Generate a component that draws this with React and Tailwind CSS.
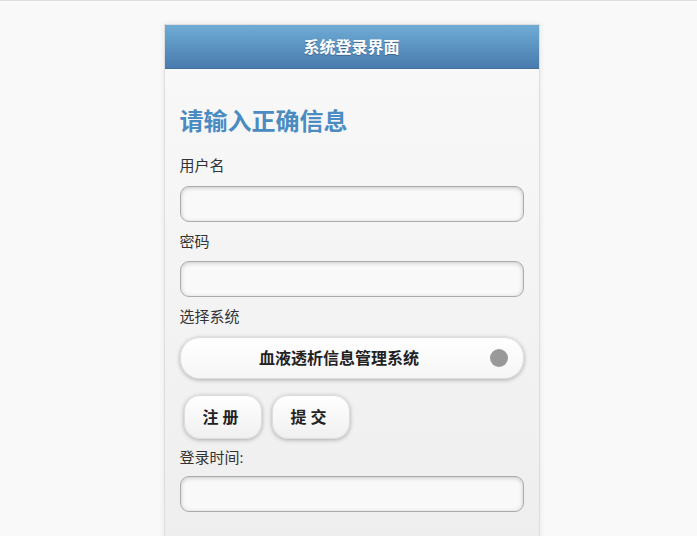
import React from 'react';

const font = { fontFamily: '"Open Sans", "Noto Sans CJK SC", sans-serif' };

const Field = () => (
  <input
    type="text"
    className="block h-[36px] w-full rounded-[9px] border border-[#aaa] bg-[#f9f9f9] px-3 shadow-[inset_0_1px_4px_rgba(0,0,0,0.2)] outline-none"
  />
);

const Label = ({ children, className = 'mb-[10px] mt-[9px]' }) => (
  <div className={`${className} text-[15px] leading-[20px] text-[#333]`}>{children}</div>
);

const App = () => {
  return (
    <div className="flex min-h-[536px] justify-center overflow-hidden border-t border-[#ddd] bg-[#f9f9f9] pl-[6px]" style={font}>
      <div className="mt-[23px] w-[376px] self-start border border-[#ddd] bg-gradient-to-b from-[#f9f9f9] to-[#eee] shadow-[0_0_6px_rgba(0,0,0,0.08)]">
        <div className="flex h-[44px] items-center justify-center border-b border-[#456f9a] bg-gradient-to-b from-[#6facd5] to-[#497bae] text-[16px] font-bold text-white [text-shadow:0_1px_0_#3e6790]">
          系统登录界面
        </div>
        <div className="px-[15px] pb-[40px] pt-[37px]">
          <h1 className="mb-[19px] text-[24px] font-bold leading-[30px] text-[#4a8bc2]">请输入正确信息</h1>
          <Label className="mb-[11px]">用户名</Label>
          <Field />
          <Label>密码</Label>
          <Field />
          <Label className="mb-[11px] mt-[9px]">选择系统</Label>
          <div className="relative flex h-[42px] items-center justify-center rounded-[20px] border border-[#ddd] bg-gradient-to-b from-white to-[#f6f6f6] pl-[15px] pr-[40px] text-[16px] font-bold text-[#222] shadow-[0_1px_4px_rgba(0,0,0,0.3)]">
            血液透析信息管理系统
            <span className="absolute right-[15px] top-1/2 h-[18px] w-[18px] -translate-y-1/2 rounded-full bg-[#999]" />
          </div>
          <div className="mt-[16px] flex gap-[10px] pl-[4px]">
            <button className="h-[44px] w-[78px] rounded-[16px] border border-[#ddd] bg-gradient-to-b from-white to-[#f0f0f0] text-[16px] font-bold tracking-[4px] text-[#222] shadow-[0_1px_4px_rgba(0,0,0,0.3)]">
              注册
            </button>
            <button className="h-[44px] w-[78px] rounded-[16px] border border-[#ddd] bg-gradient-to-b from-white to-[#f0f0f0] text-[16px] font-bold tracking-[4px] text-[#222] shadow-[0_1px_4px_rgba(0,0,0,0.3)]">
              提交
            </button>
          </div>
          <Label className="mb-[9px] mt-[8px]">登录时间:</Label>
          <Field />
        </div>
      </div>
    </div>
  );
};

export default App;
